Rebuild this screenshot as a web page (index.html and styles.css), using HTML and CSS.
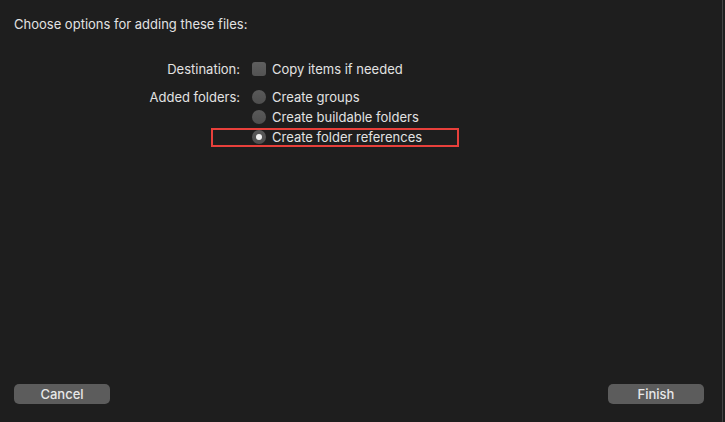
FILE: index.html
```html
<!DOCTYPE html>
<html>
<head>
<meta charset="utf-8">
<link rel="stylesheet" href="styles.css">
</head>
<body>
<div class="window">
  <div class="title">Choose options for adding these files:</div>
  <div class="form">
    <div class="label">Destination:</div>
    <div class="opt"><span class="check"></span><span>Copy items if needed</span></div>
    <div class="label label-gap">Added folders:</div>
    <div class="opt opt-gap"><span class="radio"></span><span>Create groups</span></div>
    <div class="label"></div>
    <div class="opt"><span class="radio"></span><span>Create buildable folders</span></div>
    <div class="label"></div>
    <div class="opt marked"><span class="radio on"></span><span>Create folder references</span><span class="highlight"></span></div>
  </div>
  <div class="buttons">
    <button class="btn">Cancel</button>
    <button class="btn">Finish</button>
  </div>
</div>
</body>
</html>
```

FILE: styles.css
```css
html, body {
  margin: 0;
  padding: 0;
  background: #1e1e1e;
}
body {
  font-family: Inter, "Liberation Sans", sans-serif;
  font-size: 13px;
  color: #e2e2e2;
  width: 725px;
  height: 422px;
  overflow: hidden;
}
.window {
  box-sizing: border-box;
  width: 723px;
  height: 432px;
  border-right: 1px solid #444;
  border-bottom-right-radius: 12px;
  display: flex;
  flex-direction: column;
  padding: 16px 0 28px 14px;
}
.title {
  line-height: 16px;
}
.form {
  display: grid;
  grid-template-columns: 226px auto;
  column-gap: 12px;
  margin-top: 27px;
}
.label {
  text-align: right;
  line-height: 20px;
}
.label-gap, .opt-gap {
  margin-top: 8px;
}
.opt {
  display: flex;
  align-items: center;
  height: 20px;
  gap: 6px;
}
.marked {
  position: relative;
}
.check {
  width: 14px;
  height: 14px;
  border-radius: 3px;
  background: linear-gradient(#5f5f5f, #535353);
  flex: none;
}
.radio {
  width: 14px;
  height: 14px;
  border-radius: 50%;
  background: linear-gradient(#5a5a5a, #4e4e4e);
  flex: none;
  display: flex;
  align-items: center;
  justify-content: center;
}
.radio.on::after {
  content: "";
  width: 6px;
  height: 6px;
  border-radius: 50%;
  background: #f2f2f2;
}
.highlight {
  position: absolute;
  left: -41px;
  top: 1px;
  width: 244px;
  height: 15px;
  border: 2px solid #e8403b;
}
.buttons {
  margin-top: auto;
  display: flex;
  justify-content: space-between;
  padding-right: 18px;
}
.btn {
  width: 96px;
  height: 20px;
  border: none;
  border-radius: 5px;
  background: #5c5c5c;
  color: #e8e8e8;
  font-family: Inter, "Liberation Sans", sans-serif;
  font-size: 13px;
  font-weight: 500;
  padding: 0;
  line-height: 20px;
}
```
